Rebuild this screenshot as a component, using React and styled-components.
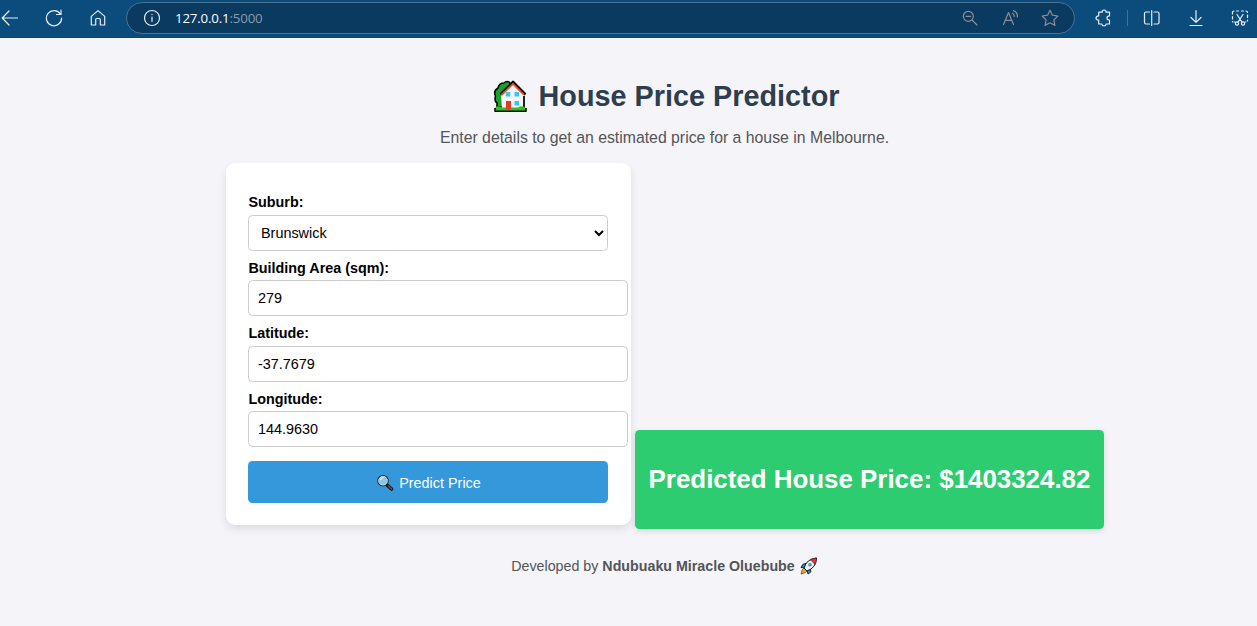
import React from "react";
import styled, { createGlobalStyle } from "styled-components";

const GlobalStyle = createGlobalStyle`
  * { box-sizing: border-box; }
  body { margin: 0; background: #f4f4f9; font-family: "Liberation Sans", Arial, sans-serif; overflow: hidden; }
`;

const Toolbar = styled.header`
  display: flex;
  align-items: center;
  height: 38px;
  padding-bottom: 2px;
  background: #0c4c7d;
  border-bottom: 1px solid #0a4573;
`;
const ToolIcon = styled.svg`
  flex: none;
  width: 18px;
  height: 18px;
  margin-left: ${(p) => p.$gap || 0}px;
  fill: none;
  stroke: ${(p) => p.$tone || "#e4edf5"};
  stroke-width: 1.2;
  stroke-linecap: round;
  stroke-linejoin: round;
`;
const AddressBar = styled.div`
  display: flex;
  flex: none;
  align-items: center;
  width: 949px;
  height: 32px;
  margin-left: 19px;
  padding-left: 16px;
  border: 1px solid #4b7291;
  border-radius: 16px;
  background: #0a3a60;
`;
const Url = styled.span`
  width: 780px;
  margin-left: 14px;
  color: #8c9ba8;
  font: 13.3px/18px "Open Sans", sans-serif;
  letter-spacing: -0.18px;
  b { color: #fff; font-weight: 400; }
`;
const Divider = styled.i`
  flex: none;
  width: 1px;
  height: 16px;
  margin-left: 15px;
  background: #3b749f;
`;

const Page = styled.main`
  display: flex;
  flex-direction: column;
  height: 588px;
`;
const Title = styled.h1`
  display: flex;
  justify-content: center;
  align-items: center;
  gap: 11px;
  height: 34px;
  margin: 41px 0 0;
  padding-left: 75px;
  color: #2c3e50;
  font-size: 28.8px;
  line-height: 34px;
  white-space: nowrap;
`;
const Intro = styled.p`
  margin: 15px 0 0;
  padding-left: 72px;
  text-align: center;
  color: #555;
  font-size: 15.82px;
  line-height: 20px;
`;
const Content = styled.div`
  display: flex;
  align-items: flex-start;
  gap: 4px;
  height: 366px;
  margin: 15px 0 0 226px;
`;
const Form = styled.form`
  width: 405px;
  height: 362px;
  padding: 30px 22px 0;
  border-radius: 9px;
  background: #fff;
  box-shadow: 0 4px 9px rgba(0, 0, 0, 0.1);
`;
const Field = styled.div`
  height: 65.4px;
`;
const Label = styled.label`
  display: block;
  height: 22px;
  padding: 0.35px 0 0 0.5px;
  color: #000;
  font-size: 14.35px;
  font-weight: 700;
  line-height: 18px;
`;
const controlStyle = `
  height: 36px;
  border: 1px solid #ccc;
  border-radius: 4.5px;
  background: #fff;
  color: #000;
  font: 14.4px "Liberation Sans", Arial, sans-serif;
`;
const Select = styled.select`
  ${controlStyle}
  display: block;
  width: 360px;
  padding: 0 0 0 8px;
`;
const Input = styled.input`
  ${controlStyle}
  display: block;
  width: 380px;
  padding: 0 9px;
`;
const Submit = styled.button`
  display: flex;
  align-items: center;
  justify-content: center;
  gap: 5px;
  width: 360px;
  height: 42px;
  margin-top: 6.4px;
  padding: 2px 0 0 1px;
  border: 0;
  border-radius: 4.5px;
  background: #3498db;
  color: #fff;
  font: 14.4px "Liberation Sans", Arial, sans-serif;
`;
const Result = styled.section`
  width: 469px;
  height: 99px;
  margin-top: 267px;
  border-radius: 4.5px;
  background: #2ecc71;
  box-shadow: 0 2px 6px rgba(0, 0, 0, 0.12);
  h2 { margin: 0; color: #fff; font-size: 25.9px; line-height: 98px; text-align: center; white-space: nowrap; }
`;
const Footer = styled.footer`
  display: flex;
  justify-content: center;
  align-items: center;
  gap: 5px;
  height: 20px;
  margin-top: 27px;
  padding-left: 72px;
  color: #555;
  font-size: 14.25px;
`;
const Emoji = styled.svg`
  flex: none;
  width: ${(p) => p.$size}px;
  height: ${(p) => p.$size}px;
  stroke-linejoin: round;
`;

const House = () => (
  <Emoji $size={35} viewBox="0 0 35 35">
    <path d="M4 28V24Q1 22 2.5 17Q0 12 5 9Q6 4 11 4Q14 1 17 4L19 28Z" fill="#16a52c" stroke="#080808" strokeWidth="1.6" />
    <path d="M8 15L20 3L32.5 15.5L31 18V31H9Z" fill="#f7f7fa" />
    <path d="M31 17V30" stroke="#080808" strokeWidth="1.8" />
    <path d="M7.5 15.5L20 3L32.5 15.5" fill="none" stroke="#080808" strokeWidth="2.6" />
    <path d="M8.5 16L20 4.8L31 15.8" fill="none" stroke="#f04a26" strokeWidth="1.8" />
    <path d="M2 32V29Q4 26 9 28.5H25Q29 26 33 29V32Z" fill="#35bd1d" />
    <path d="M13 22H18V30.5H13Z" fill="#e23b22" />
    <path d="M2 29V32.2H33V29" fill="none" stroke="#080808" strokeWidth="1.6" />
    <path d="M12.8 13h4.5v4.5h-4.5zM21.5 13h4.5v4.5h-4.5zM21.5 22h4.5v4.5h-4.5z" fill="#38c5f4" />
  </Emoji>
);
const Magnifier = () => (
  <Emoji $size={18} viewBox="0 0 18 18">
    <path d="M10.5 10.5L15.5 15" stroke="#151515" strokeWidth="3.6" strokeLinecap="round" />
    <path d="M12.5 12L15.5 15" stroke="#695047" strokeWidth="1.7" strokeLinecap="round" />
    <circle cx="7" cy="6.7" r="5.2" fill="#83c9ee" stroke="#202a30" strokeWidth="1.2" />
    <circle cx="7" cy="6.7" r="4.3" fill="none" stroke="#c6d2d8" />
    <path d="M4.5 6Q5 4 7.2 3.7" fill="none" stroke="#def6ff" strokeWidth="1.3" />
  </Emoji>
);
const Rocket = () => (
  <Emoji $size={18} viewBox="0 0 18 18">
    <path d="M6 6.5L3 7.2L1 10.5L5 11ZM10.5 12L10.8 15L8 17L7 13.5Z" fill="#2795dc" stroke="#111" strokeWidth=".9" />
    <path d="M4 11L2 13L1 17L5.5 15.5L7 14" fill="#ff9e21" stroke="#111" strokeWidth=".5" />
    <path d="M4 11Q6.5 2 16.5 1Q16 11 7 14Z" fill="#eef2f5" stroke="#111" strokeWidth="1" />
    <path d="M10.5 2.8Q13 1.2 16.5 1Q16.5 4.5 15 7.5Z" fill="#ed3036" stroke="#111" strokeWidth=".5" />
    <circle cx="10" cy="7.7" r="1.5" fill="#42b8e9" stroke="#256385" strokeWidth=".5" />
  </Emoji>
);

const muted = "#8a8f93";

export default function App() {
  return (
    <>
      <GlobalStyle />
      <Toolbar>
        <ToolIcon viewBox="0 0 18 18"><path d="M17.5 9H2.5M9 2L2.2 9L9 16" /></ToolIcon>
        <ToolIcon $gap={27} viewBox="0 0 18 18"><path d="M15.5 5.2A7.6 7.6 0 1 0 16.6 9M16 1V5.5H11.5" /></ToolIcon>
        <ToolIcon $gap={26} viewBox="0 0 18 18"><path d="M2.3 7.4L9 1.6L15.7 7.4V16H11.3V10.5Q11.3 9.5 10.3 9.5H7.7Q6.7 9.5 6.7 10.5V16H2.3Z" /></ToolIcon>
        <AddressBar>
          <ToolIcon viewBox="0 0 18 18"><circle cx="9" cy="9" r="7.5" /><path d="M9 8V12.5M9 5.4V5.6" /></ToolIcon>
          <Url><b>127.0.0.1</b>:5000</Url>
          <ToolIcon $gap={6} $tone={muted} viewBox="0 0 18 18"><circle cx="7.3" cy="7.3" r="5" /><path d="M11 11L16 16M5 7.3H9.6" /></ToolIcon>
          <ToolIcon $gap={23} $tone={muted} viewBox="0 0 18 18"><path d="M1.5 15.5L6.5 3.5L11.5 15.5M3.3 11.3H9.7M10.4 4.2Q12.2 5.2 12.3 7.5M11.5 1.6Q15.8 3.3 15.3 8" /></ToolIcon>
          <ToolIcon $gap={21} $tone={muted} viewBox="0 0 18 18"><path d="M9 1.2L11.4 6.2L16.9 7L12.9 10.9L13.9 16.4L9 13.8L4.1 16.4L5.1 10.9L1.1 7L6.6 6.2Z" /></ToolIcon>
        </AddressBar>
        <ToolIcon $gap={19} viewBox="0 0 18 18"><path d="M5.2 3.2H8.2Q8 1 10.1 1T12 3.2H15.5V6.8Q13 6.8 13 9T15.5 11.2V15H12.2Q12 17 10 17T7.8 15H4.7V11.2Q2 11.2 2 9T4.7 6.8V3.7Q4.7 3.2 5.2 3.2Z" /></ToolIcon>
        <Divider />
        <ToolIcon $gap={15} viewBox="0 0 18 18"><path d="M6.5 3H3Q1.5 3 1.5 4.5V13.5Q1.5 15 3 15H6.5M11 3H14.5Q16 3 16 4.5V13.5Q16 15 14.5 15H11M8.7 1.5V16.5" /></ToolIcon>
        <ToolIcon $gap={26} viewBox="0 0 18 18"><path d="M9 1.5V13M4 8.5L9 13.4L14 8.5M3 16.5H15" /></ToolIcon>
        <ToolIcon $gap={26} viewBox="0 0 18 18"><path d="M1.5 13V12.5M1.5 10V7.5M1.5 5V3.2Q1.5 2 3 2M5.5 2H7.5M10.5 2H12.5M15 2Q16.5 2 16.5 3.5M16.5 6V8.5M16.5 11V12M6 5.5L11 13.2M12 5.5L7 13.2M3 13H4M14 13H15" /><circle cx="6" cy="14.5" r="1.6" /><circle cx="12" cy="14.5" r="1.6" /></ToolIcon>
      </Toolbar>
      <Page>
        <Title><House />House Price Predictor</Title>
        <Intro>Enter details to get an estimated price for a house in Melbourne.</Intro>
        <Content>
          <Form onSubmit={(e) => e.preventDefault()}>
            <Field>
              <Label htmlFor="suburb">Suburb:</Label>
              <Select id="suburb"><option>Brunswick</option></Select>
            </Field>
            <Field>
              <Label htmlFor="area">Building Area (sqm):</Label>
              <Input id="area" defaultValue="279" />
            </Field>
            <Field>
              <Label htmlFor="lat">Latitude:</Label>
              <Input id="lat" defaultValue="-37.7679" />
            </Field>
            <Field>
              <Label htmlFor="lon">Longitude:</Label>
              <Input id="lon" defaultValue="144.9630" />
            </Field>
            <Submit><Magnifier />Predict Price</Submit>
          </Form>
          <Result><h2>Predicted House Price: $1403324.82</h2></Result>
        </Content>
        <Footer><span>Developed by <strong>Ndubuaku Miracle Oluebube</strong></span><Rocket /></Footer>
      </Page>
    </>
  );
}
